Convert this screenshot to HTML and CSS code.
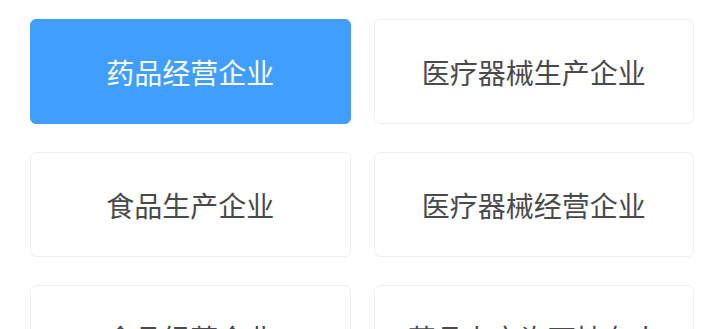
FILE: index.html
```html
<!DOCTYPE html>
<html lang="zh-CN">
<head>
  <meta charset="UTF-8" />
  <meta name="viewport" content="width=device-width, initial-scale=1.0" />
  <title>企业类型</title>
  <link rel="stylesheet" href="styles.css">
</head>
<body>
  <div class="type-list">
    <div class="type-item active">药品经营企业</div>
    <div class="type-item">医疗器械生产企业</div>
    <div class="type-item">食品生产企业</div>
    <div class="type-item">医疗器械经营企业</div>
    <div class="type-item">食品经营企业</div>
    <div class="type-item">药品上市许可持有人</div>
  </div>
</body>
</html>
```

FILE: styles.css
```css
body {
  margin: 0;
  background: #fff;
  font-family: "Noto Sans CJK SC", "Noto Sans", sans-serif;
  overflow: hidden;
}
.type-list {
  display: grid;
  grid-template-columns: 1fr 1fr;
  column-gap: 23px;
  row-gap: 28px;
  padding: 19px 26px 0 30px;
}
.type-item {
  height: 105px;
  box-sizing: border-box;
  display: flex;
  align-items: center;
  justify-content: center;
  border: 1px solid #f0f0f0;
  border-radius: 6px;
  background: #fff;
  color: #4a4a4a;
  font-size: 28px;
}
.type-item.active {
  background: #409eff;
  border-color: #409eff;
  color: #fff;
}
```
